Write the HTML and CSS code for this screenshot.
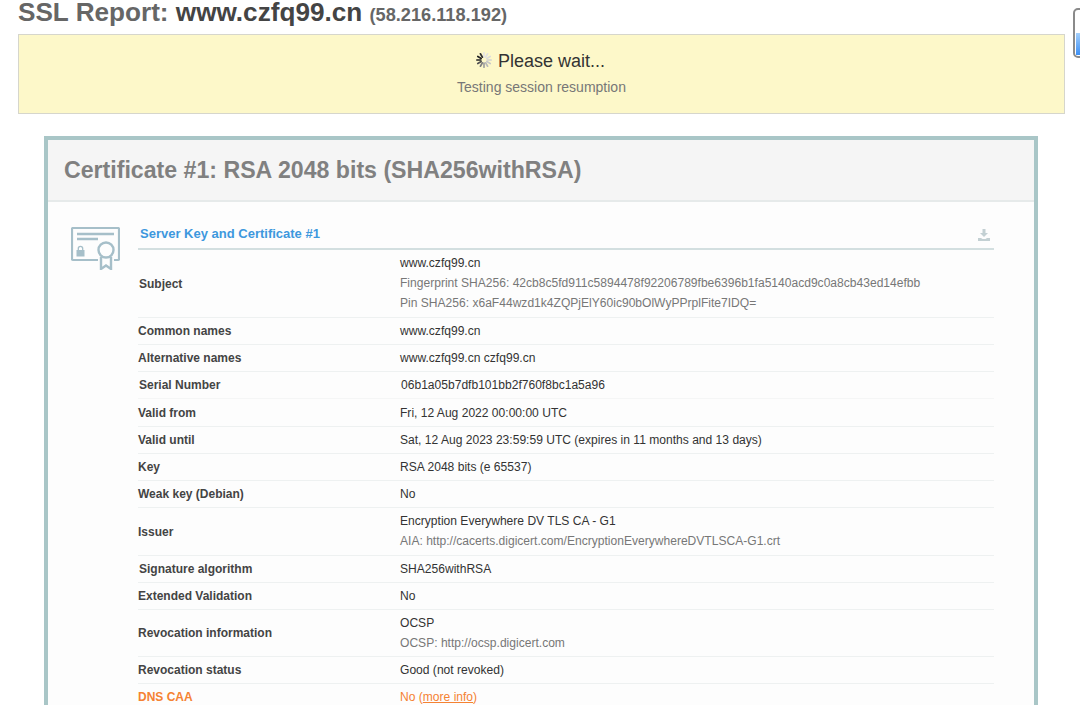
FILE: index.html
```html
<!DOCTYPE html>
<html lang="en">
<head>
<meta charset="utf-8">
<title>SSL Report: www.czfq99.cn</title>
<link rel="stylesheet" href="styles.css">
</head>
<body>
<div class="scroll-widget"><div class="scroll-fill"></div></div>
<main class="page">
  <h1 class="title">SSL Report: <b>www.czfq99.cn</b> <small>(58.216.118.192)</small></h1>
  <section class="notice">
    <div class="wait">
      <svg class="spinner" viewBox="0 0 16 16" width="16" height="16">
        <g stroke-width="1.7" stroke-linecap="round">
          <path d="M8 .8v4" stroke="#e6e6e6"/><path d="M11.6 1.800l-2 3.400" stroke="#e2e2e2"/><path d="M14.200 4.400l-3.400 2" stroke="#dcdcdc"/><path d="M15.200 8h-4" stroke="#d2d2d2"/>
          <path d="M14.200 11.600l-3.400-2" stroke="#c8c8c8"/><path d="M11.600 14.200l-2-3.400" stroke="#b8b8b8"/><path d="M8 15.200v-4" stroke="#a0a0a0"/><path d="M4.400 14.200l2-3.400" stroke="#808080"/>
          <path d="M1.800 11.600l3.400-2" stroke="#505050"/><path d="M.8 8h4" stroke="#222"/><path d="M1.800 4.400l3.400 2" stroke="#222"/><path d="M4.400 1.800l2 3.400" stroke="#333"/>
        </g>
      </svg>
      <span>Please wait...</span>
    </div>
    <div class="status">Testing session resumption</div>
  </section>
  <section class="card">
    <h2 class="card-head">Certificate #1: RSA 2048 bits (SHA256withRSA)</h2>
    <div class="card-body">
      <svg class="cert-icon" viewBox="0 0 49 43" width="49" height="43" fill="none" stroke="#a6bfc9" stroke-width="2.200">
        <path d="M27 33H2a1 1 0 0 1-1-1V2a1 1 0 0 1 1-1h45a1 1 0 0 1 1 1v30a1 1 0 0 1-1 1h-4"/>
        <path d="M6 7h37M6 12h21" stroke-width="2.400"/>
        <circle cx="35" cy="23" r="7.500" stroke-width="2.400"/>
        <path d="M30 30v12l5-3.500 5 3.500V30" stroke-width="2.400"/>
        <rect x="5.500" y="23" width="8" height="6.500" fill="#a6bfc9" stroke="none"/>
        <path d="M7.300 23v-1.500a2.200 2.200 0 0 1 4.400 0V23" stroke-width="1.300"/>
      </svg>
      <div class="details">
        <div class="section-head">
          <span class="section-title">Server Key and Certificate #1</span>
          <svg class="dl-icon" viewBox="0 0 12 12" width="12" height="12" fill="#c3d0d3"><path d="M4.500 0h3v4H10L6 8 2 4h2.500zM0 9h3l1.500 1h3L9 9h3v3H0z"/></svg>
        </div>
        <div class="row tall">
          <div class="label shift">Subject</div>
          <div class="value"><div>www.czfq99.cn</div><div class="sub">Fingerprint SHA256: 42cb8c5fd911c5894478f92206789fbe6396b1fa5140acd9c0a8cb43ed14efbb</div><div class="sub">Pin SHA256: x6aF44wzd1k4ZQPjElY60ic90bOlWyPPrplFite7IDQ=</div></div>
        </div>
        <div class="row"><div class="label">Common names</div><div class="value">www.czfq99.cn</div></div>
        <div class="row"><div class="label">Alternative names</div><div class="value">www.czfq99.cn czfq99.cn</div></div>
        <div class="row serial"><div class="label shift">Serial Number</div><div class="value shift">06b1a05b7dfb101bb2f760f8bc1a5a96</div></div>
        <div class="row wide"><div class="label">Valid from</div><div class="value">Fri, 12 Aug 2022 00:00:00 UTC</div></div>
        <div class="row"><div class="label">Valid until</div><div class="value">Sat, 12 Aug 2023 23:59:59 UTC (expires in 11 months and 13 days)</div></div>
        <div class="row"><div class="label">Key</div><div class="value">RSA 2048 bits (e 65537)</div></div>
        <div class="row"><div class="label">Weak key (Debian)</div><div class="value">No</div></div>
        <div class="row mid"><div class="label">Issuer</div><div class="value"><div>Encryption Everywhere DV TLS CA - G1</div><div class="sub">AIA: http://cacerts.digicert.com/EncryptionEverywhereDVTLSCA-G1.crt</div></div></div>
        <div class="row"><div class="label shift">Signature algorithm</div><div class="value">SHA256withRSA</div></div>
        <div class="row"><div class="label">Extended Validation</div><div class="value">No</div></div>
        <div class="row narrow"><div class="label">Revocation information</div><div class="value"><div>OCSP</div><div class="sub">OCSP: http://ocsp.digicert.com</div></div></div>
        <div class="row"><div class="label">Revocation status</div><div class="value">Good (not revoked)</div></div>
        <div class="row warn"><div class="label">DNS CAA</div><div class="value">No (<a class="more" href="#">more info</a>)</div></div>
      </div>
    </div>
  </section>
</main>
</body>
</html>
```
FILE: styles.css
```css
* { box-sizing: border-box; }
html, body { margin: 0; height: 705px; overflow: hidden; background: #fff; }
body { font-family: "Liberation Sans", Arial, sans-serif; color: #333; }
.page { padding-left: 18px; width: 1065px; }
.title { margin: 0; height: 34px; line-height: 24px; font-size: 26.150px; font-weight: 700; color: #666; white-space: nowrap; }
.title b { color: #444; }
.title small { font-size: 18.200px; color: #666; }
.notice { height: 80px; background: #fdf8c9; border: 1px solid #d6d6cc; text-align: center; padding-top: 15px; }
.wait { display: flex; justify-content: center; align-items: center; gap: 6px; font-size: 18px; line-height: 22px; color: #333; }
.spinner { flex: none; margin-left: -2px; margin-top: -2px; }
.status { margin-top: 6px; font-size: 14px; line-height: 18px; color: #777; }
.card { margin: 22px 0 0 26px; width: 994px; border: 4px solid #a9c6c7; border-bottom: 0; background: #fdfdfd; }
.card-head { margin: 0; height: 62px; padding: 15px 16px 0; font-size: 23.150px; line-height: 30px; font-weight: 700; color: #808080; background: #f5f5f5; border-bottom: 2px solid #e6eaea; white-space: nowrap; }
.card-body { display: flex; align-items: flex-start; padding: 20px 40px 0 23px; }
.cert-icon { flex: none; margin-right: 18px; margin-top: 5px; }
.details { flex: 1; min-width: 0; }
.section-head { display: flex; justify-content: space-between; align-items: flex-start; height: 28px; padding: 0 4px 0 2px; border-bottom: 2px solid #d3dfe0; }
.section-title { font-size: 13px; line-height: 24px; font-weight: 700; color: #3d98dd; }
.dl-icon { margin-top: 7px; }
.row { display: grid; grid-template-columns: 262px 1fr; align-items: center; height: 27px; font-size: 12.070px; line-height: 20px; border-bottom: 1px solid #eef1f1; }
.tall { height: 68px; }
.mid { height: 48px; }
.wide { height: 28px; }
.narrow { height: 47px; }
.label { font-size: 12px; font-weight: 700; color: #444; }
.value { color: #333; }
.tall .value, .mid .value { margin-top: -2px; }
.shift { padding-left: 1px; }
.sub { color: #777; }
.serial { border-bottom-color: #f5f6f6; }
.warn .label, .warn .value { color: #f58233; }
.more { color: #f58233; }
.scroll-widget { position: absolute; left: 1073px; top: 8px; width: 12px; height: 50px; border: 2px solid #8a8a8a; border-radius: 5px; background: #fff; }
.scroll-fill { position: absolute; left: 1px; right: 0; top: 23px; bottom: 1px; background: linear-gradient(#a5d0fb, #3d90f5); }
```
